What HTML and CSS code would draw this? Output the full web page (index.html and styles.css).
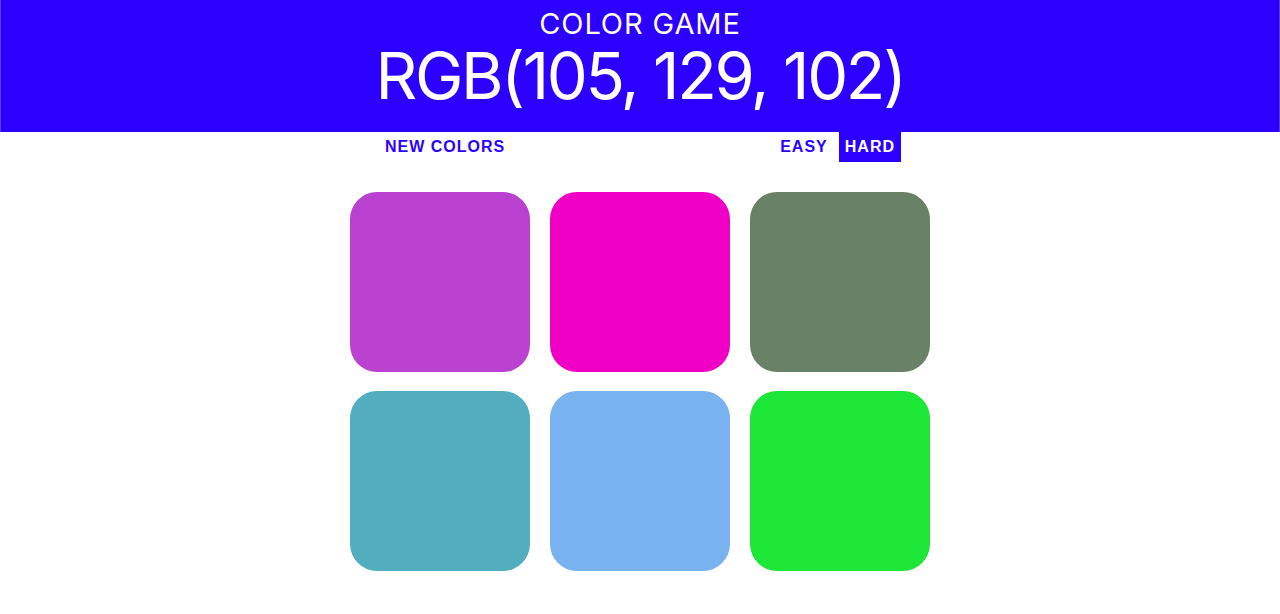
FILE: index.html
```html
<!DOCTYPE html>
<html lang="en">
<head>
<meta charset="utf-8">
<title>Color Game</title>
<link rel="stylesheet" href="styles.css">
</head>
<body>
<h1 class="header">
  <span class="title">COLOR GAME</span>
  <span class="target">RGB(105, 129, 102)</span>
</h1>
<div class="stripe">
  <div class="stripe-inner">
    <button class="btn">New Colors</button>
    <span class="message"></span>
    <div class="modes">
      <button class="btn">Easy</button>
      <button class="btn selected">Hard</button>
    </div>
  </div>
</div>
<div class="container">
  <div class="square" style="background: rgb(187, 66, 208);"></div>
  <div class="square" style="background: rgb(240, 0, 196);"></div>
  <div class="square" style="background: rgb(105, 129, 102);"></div>
  <div class="square" style="background: rgb(82, 174, 190);"></div>
  <div class="square" style="background: rgb(120, 178, 239);"></div>
  <div class="square" style="background: rgb(30, 230, 54);"></div>
</div>
</body>
</html>
```
FILE: styles.css
```css
body {
  margin: 0;
  background: #ffffff;
  font-family: "Liberation Sans", Arial, sans-serif;
}

.header {
  margin: 0;
  height: 132px;
  box-sizing: border-box;
  padding-top: 7px;
  background: #2b00ff;
  border-left: 1px solid #5a3cff;
  border-right: 1px solid #5a3cff;
  color: #ffffff;
  text-align: center;
  font-family: Inter, "Liberation Sans", sans-serif;
  font-weight: 400;
  display: flex;
  flex-direction: column;
  align-items: center;
}

.title {
  font-size: 29px;
  line-height: 34px;
  letter-spacing: 0.9px;
}

.target {
  font-size: 65px;
  line-height: 70px;
  letter-spacing: -2.35px;
}

.stripe {
  height: 30px;
  background: #ffffff;
}

.stripe-inner {
  width: 522px;
  height: 100%;
  margin: 0 auto;
  display: flex;
  justify-content: space-between;
}

.modes {
  display: flex;
  gap: 5px;
  height: 100%;
}

.btn {
  border: none;
  background: none;
  height: 100%;
  padding: 0 6px;
  margin: 0;
  font-family: "Liberation Sans", Arial, sans-serif;
  font-size: 16px;
  font-weight: 700;
  letter-spacing: 1px;
  text-transform: uppercase;
  color: #2b00ff;
  cursor: pointer;
}

.btn.selected {
  background: #2b00ff;
  color: #ffffff;
}

.container {
  width: 600px;
  margin: 30px auto 0;
  display: grid;
  grid-template-columns: repeat(3, 180px);
  column-gap: 20px;
  row-gap: 19px;
  padding: 0 10px;
  box-sizing: border-box;
}

.square {
  width: 180px;
  height: 180px;
  border-radius: 27px;
}
```
